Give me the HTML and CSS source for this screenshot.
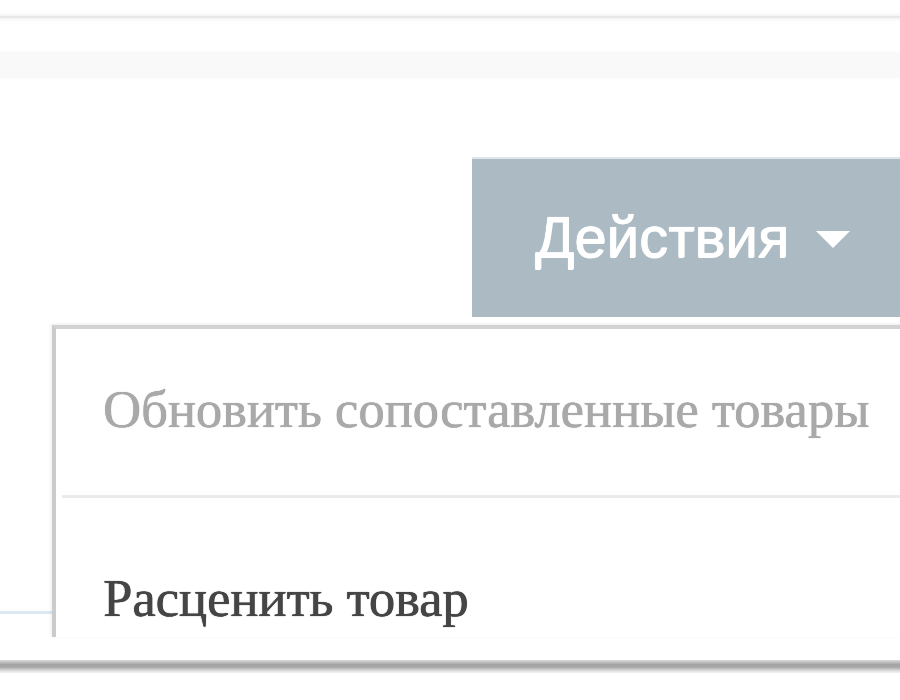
FILE: index.html
```html
<!DOCTYPE html>
<html lang="ru">
<head>
<meta charset="utf-8">
<title>Действия</title>
<link rel="stylesheet" href="styles.css">
</head>
<body>
<div class="frame">
  <div class="topline"></div>
  <div class="band"></div>
  <div class="toolbar">
    <button class="actions-btn" type="button">
      <span class="actions-label">Действия</span>
      <span class="caret"></span>
    </button>
  </div>
  <div class="table-area">
    <div class="row-line"></div>
  </div>
  <div class="menu">
    <div class="menu-item disabled">Обновить сопоставленные товары</div>
    <div class="menu-sep"></div>
    <div class="menu-item last">Расценить товар</div>
  </div>
</div>
<div class="frame-edge"></div>
</body>
</html>
```
FILE: styles.css
```css
html, body {
  margin: 0;
  padding: 0;
  background: #ffffff;
}

.frame {
  position: relative;
  height: 660px;
  overflow: hidden;
  background: #ffffff;
}

.topline {
  margin-top: 16px;
  height: 2px;
  background: #e8e8e8;
  box-shadow: 0 0 3px 2px #f4f4f4;
}

.band {
  margin-top: 34px;
  height: 26px;
  background: #f9f9f9;
  box-shadow: 0 0 3px 1px #fbfbfb;
}

.toolbar {
  display: flex;
  justify-content: flex-end;
  margin-top: 79px;
}

.actions-btn {
  display: flex;
  align-items: center;
  width: 428px;
  height: 160px;
  padding: 0 0 0 63px;
  margin: 0;
  border: 0;
  border-top: 2px solid #dfe5e9;
  background: #acbac3;
  color: #ffffff;
  font-family: "Liberation Sans", Arial, sans-serif;
  font-size: 58px;
  box-sizing: border-box;
  text-align: left;
}

.actions-label {
  line-height: 1;
  margin-top: -2px;
  text-shadow: 0 0 1px #ffffff, 0.7px 0 0 #ffffff, 0 0.5px 0 #ffffff;
}

.caret {
  width: 0;
  height: 0;
  margin-left: 27px;
  margin-top: 2px;
  border-left: 17px solid transparent;
  border-right: 17px solid transparent;
  border-top: 17px solid #ffffff;
}

.table-area {
  height: 296px;
  position: relative;
}

.row-line {
  margin-top: 294px;
  height: 3px;
  width: 60px;
  background: #dde9f2;
}

.menu {
  position: absolute;
  left: 52px;
  top: 325px;
  right: -20px;
  height: 308px;
  background: #ffffff;
  border-left: 4px solid #cbcbcb;
  border-top: 4px solid #d2d2d2;
  box-shadow: -1px -1px 3px rgba(0, 0, 0, 0.08);
}

.menu-item {
  display: flex;
  align-items: center;
  padding-left: 47px;
  font-family: "Liberation Serif", "Times New Roman", serif;
  font-size: 52.5px;
  color: #454545;
  white-space: nowrap;
  text-shadow: 0 0 1px currentColor, 0.5px 0 0 currentColor;
}

.menu-item.disabled {
  height: 166px;
  color: #a9a9a9;
  padding-bottom: 6px;
  box-sizing: border-box;
}

.menu-item.last {
  height: 140px;
  padding-top: 60px;
  box-sizing: border-box;
}

.menu-sep {
  margin-left: 6px;
  height: 3px;
  background: #ebebeb;
}

.frame-edge {
  height: 13px;
  background: linear-gradient(#dcdcdc, #a3a3a3 35%, #a8a8a8 55%, #d8d8d8 80%, #f4f4f4);
}
```
